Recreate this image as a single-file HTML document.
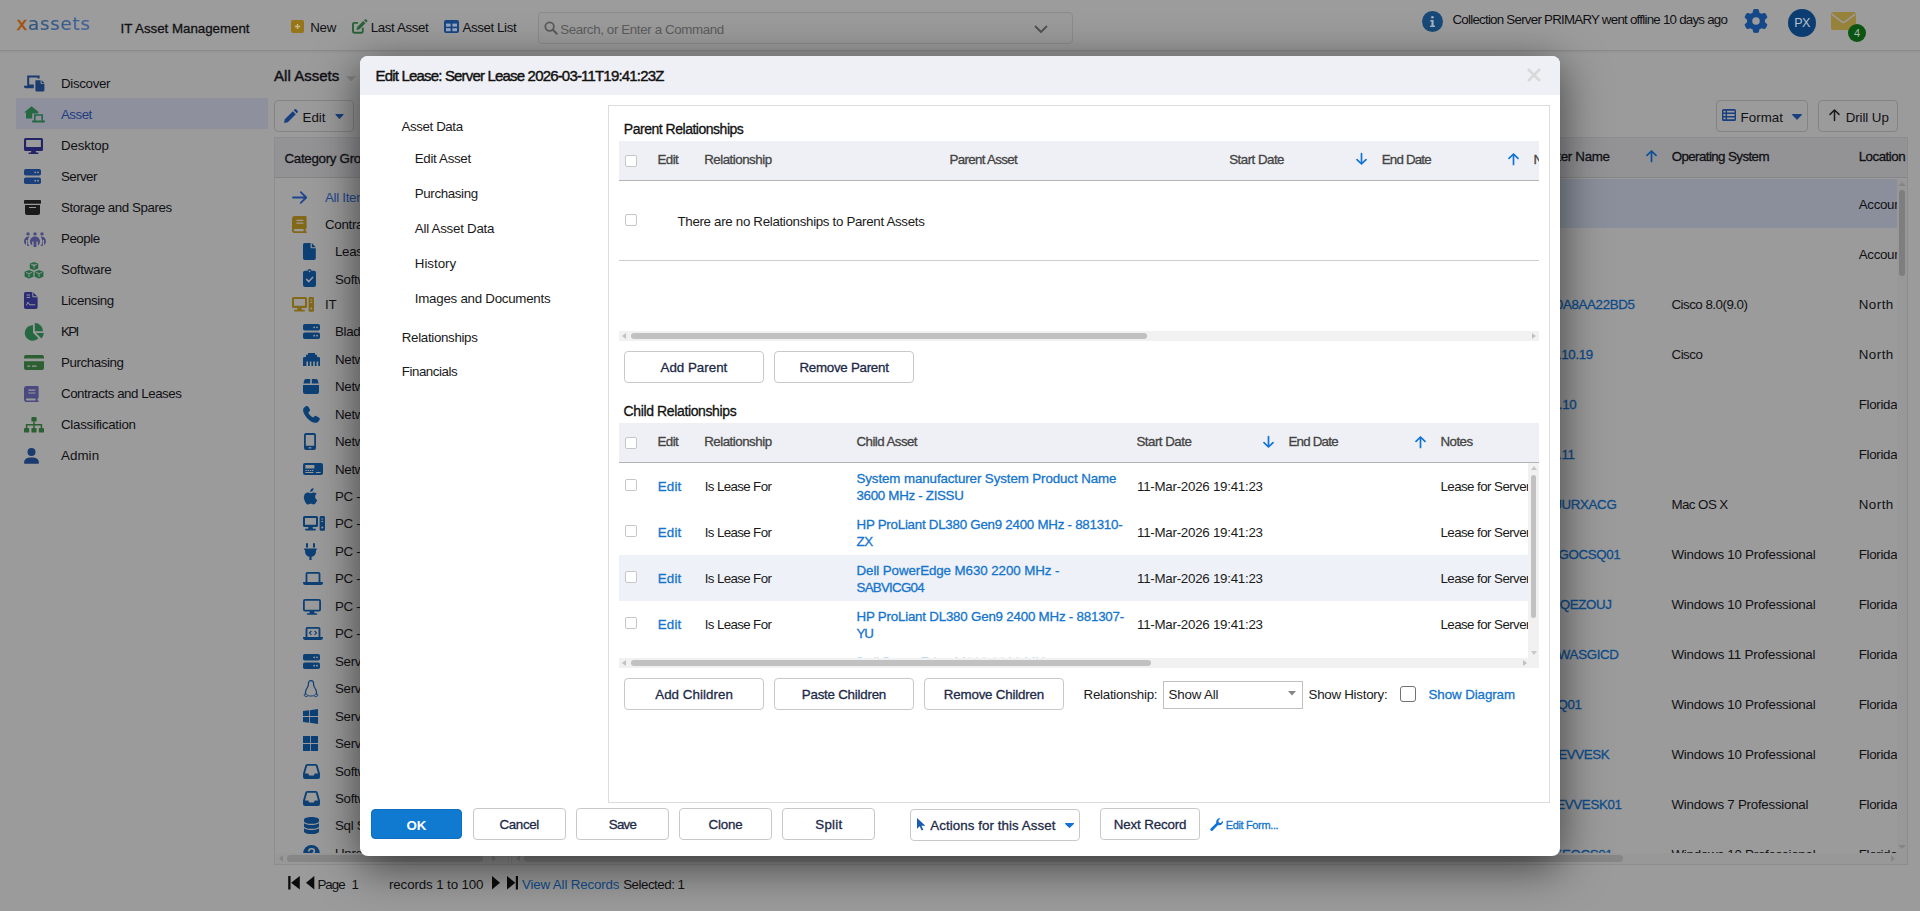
<!DOCTYPE html>
<html lang="en"><head><meta charset="utf-8"><title>xAssets - IT Asset Management</title>
<style>
*{box-sizing:border-box;margin:0;padding:0}
html,body{width:1920px;height:911px;overflow:hidden;background:#9b9b9b}
body{font-family:"Liberation Sans",sans-serif;font-size:13.33px;color:#111114;letter-spacing:-0.3px;position:relative}
.a{position:absolute}
.t{position:absolute;white-space:nowrap;line-height:20px;height:20px}
svg{position:absolute;overflow:visible}
.b{font-weight:bold}
.sb{-webkit-text-stroke:0.3px currentColor}
.sb2{-webkit-text-stroke:0.42px currentColor}
#bg{position:absolute;left:0;top:0;width:1920px;height:911px;background:#9b9b9b}
#top{position:absolute;left:0;top:0;width:1920px;height:51px;background:#9c9c9c;border-bottom:1px solid #8a8a8a;box-shadow:0 1px 2px rgba(0,0,0,.06)}
.btn{position:absolute;border:1px solid #848484;border-radius:4px;background:#9b9b9b;height:32px}
#modal{position:absolute;left:360px;top:56px;width:1200px;height:800px;background:#fff;border-radius:8px;box-shadow:0 10px 46px rgba(0,0,0,.6);color:#1a1a1a}
.cb{border:1px solid #c6c6c6;border-radius:2px;background:#fff}
.hd{color:#444}
.lk{color:#1575cc}
.mbtn{position:absolute;border:1px solid #c8c8c8;border-radius:4px;background:#fff}
.mbtn.ok{background:#1079d0;border-color:#0d6fc0}

</style></head><body>
<div id="bg"></div>
<div id="top">
<div class="t" style="left:16.5px;top:11px;font-family:'DejaVu Sans','Liberation Sans',sans-serif;font-size:18.3px;line-height:26px;height:26px;letter-spacing:0.75px"><span style="color:#a2520a;-webkit-text-stroke:0.4px #a2520a">x</span><span style="-webkit-text-stroke:0.12px #3a5c8c;background:linear-gradient(90deg,#2b5479,#44639d);-webkit-background-clip:text;background-clip:text;color:transparent">assets</span></div>
<div class="t sb" style="left:120.5px;top:19px;letter-spacing:-0.02px;">IT Asset Management</div>
<svg style="left:291px;top:20px" width="13" height="13" viewBox="0 0 13 13"><rect x="0" y="0" width="13" height="13" rx="2" fill="#977519"/><path d="M6.500 3.900v5.200M3.900 6.500h5.200" stroke="#c8b98a" stroke-width="1.400" fill="none"/></svg>
<div class="t" style="left:310.2px;top:18px;">New</div>
<svg style="left:352px;top:19px" width="15" height="15" viewBox="0 0 15 15"><path d="M10.800 8.800v3.700a1.200 1.200 0 0 1-1.200 1.200H2.200A1.200 1.200 0 0 1 1 12.500V5.100a1.200 1.200 0 0 1 1.200-1.200h3.800" stroke="#2a6338" stroke-width="1.900" fill="none"/><path d="M4.400 11.100l.8-3.100 6-6 2.300 2.300-6 6zM12 1.200l.8-.8a1 1 0 0 1 1.400 0l.9.900a1 1 0 0 1 0 1.400l-.8.800z" fill="#2a6338"/></svg>
<div class="t" style="left:370.8px;top:18px;letter-spacing:-0.41px;">Last Asset</div>
<svg style="left:444px;top:20px" width="15" height="13" viewBox="0 0 15 13"><rect x="0" y="0" width="15" height="13" rx="2" fill="#174684"/><rect x="2" y="3.600" width="4.600" height="3" fill="#9aa6c0"/><rect x="8.400" y="3.600" width="4.600" height="3" fill="#9aa6c0"/><rect x="2" y="8.200" width="4.600" height="3" fill="#9aa6c0"/><rect x="8.400" y="8.200" width="4.600" height="3" fill="#9aa6c0"/></svg>
<div class="t" style="left:462.5px;top:18px;letter-spacing:-0.41px;">Asset List</div>
<div class="a" style="left:538px;top:12px;width:535px;height:32px;border:1px solid #8c8c8c;border-radius:4px;background:#9b9b9b"></div>
<svg style="left:544px;top:21px" width="14" height="14" viewBox="0 0 14 14"><circle cx="5.600" cy="5.600" r="4.300" stroke="#5a5a5a" stroke-width="1.800" fill="none"/><path d="M8.800 8.800l4 4" stroke="#5a5a5a" stroke-width="2" stroke-linecap="round"/></svg>
<div class="t" style="left:560.2px;top:20px;letter-spacing:-0.37px;color:#5c5c5c;">Search, or Enter a Command</div>
<svg style="left:1034px;top:25px" width="14" height="9" viewBox="0 0 14 9"><path d="M1.500 1.500l5.500 5.500 5.500-5.500" stroke="#505050" stroke-width="1.800" fill="none" stroke-linecap="round" stroke-linejoin="round"/></svg>
<svg style="left:1422px;top:11px" width="21" height="21" viewBox="0 0 21 21"><circle cx="10.500" cy="10.500" r="10.500" fill="#174a78"/><path d="M8.300 9h3.300v5.400h1.400v1.500H8.100v-1.500h1.400v-3.900H8.300z" fill="#a9b3c0"/><circle cx="10.400" cy="6.300" r="1.300" fill="#a9b3c0"/></svg>
<div class="t" style="left:1452.5px;top:10px;letter-spacing:-0.76px;">Collection Server PRIMARY went offline 10 days ago</div>
<svg style="left:1744px;top:9px" width="24" height="24" viewBox="0 0 512 512"><path fill="#144888" d="M495.900 166.600c3.200 8.700 .5 18.400-6.400 24.600l-43.300 39.400c1.100 8.300 1.700 16.800 1.700 25.400s-.6 17.100-1.700 25.400l43.300 39.400c6.900 6.200 9.600 15.900 6.400 24.600c-4.400 11.900-9.700 23.300-15.800 34.300l-4.700 8.100c-6.600 11-14 21.400-22.100 31.200c-5.900 7.200-15.700 9.600-24.500 6.800l-55.700-17.700c-13.400 10.300-28.200 18.900-44 25.400l-12.500 57.100c-2 9.100-9 16.300-18.200 17.800c-13.800 2.300-28 3.500-42.500 3.500s-28.700-1.200-42.500-3.500c-9.200-1.500-16.200-8.700-18.200-17.800l-12.500-57.100c-15.800-6.500-30.600-15.100-44-25.400L83.100 425.900c-8.800 2.800-18.600 .3-24.500-6.800c-8.100-9.800-15.500-20.200-22.100-31.200l-4.700-8.100c-6.100-11-11.400-22.400-15.800-34.300c-3.200-8.700-.5-18.400 6.400-24.600l43.300-39.400C64.600 273.100 64 264.600 64 256s.6-17.100 1.700-25.400L22.400 191.200c-6.900-6.200-9.600-15.900-6.400-24.600c4.400-11.900 9.700-23.300 15.800-34.300l4.700-8.100c6.600-11 14-21.400 22.100-31.200c5.900-7.200 15.700-9.600 24.500-6.800l55.700 17.700c13.400-10.300 28.200-18.900 44-25.400l12.500-57.100c2-9.100 9-16.300 18.200-17.800C227.300 1.200 241.500 0 256 0s28.700 1.200 42.500 3.500c9.200 1.500 16.200 8.700 18.200 17.800l12.500 57.100c15.800 6.500 30.600 15.100 44 25.400l55.700-17.700c8.800-2.800 18.600-.3 24.500 6.800c8.100 9.800 15.500 20.200 22.100 31.200l4.700 8.100c6.100 11 11.400 22.400 15.800 34.300zM256 336a80 80 0 1 0 0-160 80 80 0 1 0 0 160z"/></svg>
<div class="a" style="left:1788px;top:9px;width:28px;height:28px;border-radius:14px;background:#0c3d72"></div>
<div class="t" style="left:1788px;top:13px;width:28px;text-align:center;color:#b9c0cc;font-size:12.5px;letter-spacing:-0.5px">PX</div>
<svg style="left:1831px;top:12px" width="25" height="18" viewBox="0 0 25 18"><rect x="0" y="0" width="25" height="18" rx="2.500" fill="#97823c"/><path d="M0.800 2.200l10.300 7.700a2.300 2.300 0 0 0 2.800 0l10.300-7.700" stroke="#9b9b9b" stroke-width="1.600" fill="none"/></svg>
<div class="a" style="left:1848px;top:24px;width:18px;height:18px;border-radius:9px;background:#0b5411"></div>
<div class="t" style="left:1848px;top:23px;width:18px;text-align:center;color:#a9b8a9;font-size:11px">4</div>
</div>
<div id="side">
  <div class="a" style="left:16px;top:98px;width:252px;height:31px;background:#8f909e"></div>

  <!-- Discover: laptop-file -->
  <svg style="left:24px;top:75px" width="22" height="17" viewBox="0 0 22 17"><path d="M3.2 0.4h12.4v3.2h-2V2.4H5.2v7.2h4.6v3.6H1.6A1.6 1.6 0 0 1 0 11.6V10.8h3.2z" fill="#1a3b70"/><path d="M11.4 5.2h5.2V8.8h3.8V15.2a1.4 1.4 0 0 1-1.4 1.4H12.8a1.4 1.4 0 0 1-1.4-1.4z" fill="#1a3b70"/><path d="M17.6 5.2l2.8 2.8h-2.8z" fill="#1a3b70"/></svg>
  <div class="t" style="left:61.0px;top:74px;letter-spacing:-0.33px;">Discover</div>

  <!-- Asset: house-laptop -->
  <svg style="left:24px;top:106px" width="22" height="17" viewBox="0 0 22 17"><path d="M7.6 0.2L0 6.6h2v6h6.2V7.4h5.6V6.6h1.4z" fill="#256842"/><path d="M10 8.2h9v6.4h2v0.8a1 1 0 0 1-1 1H9a1 1 0 0 1-1-1v-0.8h2zM11.6 9.8v4.8h5.8V9.8z" fill="#256842" fill-rule="evenodd"/></svg>
  <div class="t" style="left:61.0px;top:105px;letter-spacing:-0.52px;color:#223c7e;">Asset</div>

  <!-- Desktop -->
  <svg style="left:24px;top:138px" width="19" height="16" viewBox="0 0 19 16"><path d="M1.6 0h15.8A1.6 1.6 0 0 1 19 1.6v9.8A1.6 1.6 0 0 1 17.400 13H11.600l.5 1.600h2.300v1.400H4.600v-1.400h2.300l.5-1.600H1.600A1.600 1.600 0 0 1 0 11.400V1.600A1.600 1.600 0 0 1 1.600 0zM2.100 2.100v6.800h14.800V2.100z" fill="#232368" fill-rule="evenodd"/></svg>
  <div class="t" style="left:61.0px;top:136px;letter-spacing:-0.17px;">Desktop</div>

  <!-- Server -->
  <svg style="left:24px;top:169px" width="17" height="15" viewBox="0 0 17 15"><rect x="0" y="0" width="17" height="6.6" rx="1.8" fill="#1a3f7c"/><rect x="0" y="8.400" width="17" height="6.600" rx="1.800" fill="#1a3f7c"/><circle cx="11.200" cy="3.300" r=".9" fill="#9b9b9b"/><circle cx="14" cy="3.300" r=".9" fill="#9b9b9b"/><circle cx="11.200" cy="11.700" r=".9" fill="#9b9b9b"/><circle cx="14" cy="11.700" r=".9" fill="#9b9b9b"/></svg>
  <div class="t" style="left:61.0px;top:167px;letter-spacing:-0.58px;">Server</div>

  <!-- Storage: box-archive -->
  <svg style="left:24px;top:200px" width="17" height="15" viewBox="0 0 17 15"><rect x="0" y="0" width="17" height="3.800" rx=".9" fill="#1b1b1b"/><path d="M1 5h15v8a2 2 0 0 1-2 2H3a2 2 0 0 1-2-2zM5.500 6.900a.6.600 0 0 0 0 1.200h6a.6.600 0 0 0 0-1.200z" fill="#1b1b1b" fill-rule="evenodd"/></svg>
  <div class="t" style="left:61.0px;top:198px;letter-spacing:-0.44px;">Storage and Spares</div>

  <!-- People -->
  <svg style="left:24px;top:232px" width="22" height="15" viewBox="0 0 22 15"><circle cx="4" cy="1.900" r="1.700" fill="#4a4a80"/><circle cx="11" cy="1.900" r="1.700" fill="#4a4a80"/><circle cx="18" cy="1.900" r="1.700" fill="#4a4a80"/><path d="M4.400 4.600c-2.800.2-4.400 2.400-4.400 5 0 1.600.8 2.800 2 3.400v-5h1.200v6h2.400c-1.200-1.200-1.800-2.800-1.800-4.600 0-1.800.6-3.400 1.600-4.600z" fill="#4a4a80"/><path d="M17.600 4.600c2.800.2 4.400 2.400 4.400 5 0 1.600-.8 2.800-2 3.400v-5h-1.200v6h-2.400c1.200-1.200 1.800-2.800 1.800-4.600 0-1.800-.6-3.400-1.600-4.600z" fill="#4a4a80"/><path d="M11 4.400c-3 0-5 2.200-5 5 0 1.800.8 3.200 2.200 4V9.600h1.400V15h2.800V9.600h1.400v3.800c1.400-.8 2.200-2.200 2.200-4 0-2.800-2-5-5-5z" fill="#4a4a80"/></svg>
  <div class="t" style="left:61.0px;top:229px;letter-spacing:-0.49px;">People</div>

  <!-- Software: cubes -->
  <svg style="left:24px;top:262px" width="20" height="17" viewBox="0 0 20 17"><path d="M10 0l4.200 1.700v4.800L10 8.200 5.800 6.500V1.700zM7 2.600l3 1.200 3-1.200" fill="#256842"/><path d="M5 8l4.400 1.800v5L5 16.600.6 14.800v-5z" fill="#256842"/><path d="M15 8l4.400 1.800v5L15 16.600l-4.400-1.800v-5z" fill="#256842"/><path d="M7.200 2.500l2.800 1.100 2.800-1.100M10 3.600v3M2 10.400l3 1.200 3-1.200M5 11.600v3.400M12 10.400l3 1.200 3-1.200M15 11.600v3.400" stroke="#9b9b9b" stroke-width=".9" fill="none"/></svg>
  <div class="t" style="left:61.0px;top:260px;letter-spacing:-0.26px;">Software</div>

  <!-- Licensing: file-contract -->
  <svg style="left:24px;top:292px" width="14" height="17" viewBox="0 0 14 17"><path d="M1.800 0h7l4.800 4.800v10.400a1.800 1.800 0 0 1-1.800 1.800H1.800A1.800 1.800 0 0 1 0 15.200V1.800A1.800 1.800 0 0 1 1.800 0z" fill="#2b2b76"/><path d="M8.800 0v4.800h4.800M2.600 3h3.400M2.600 5.400h3.400M2.400 13.400l1.600-3.200 1.600 2.600h5.600" stroke="#9b9b9b" stroke-width="1" fill="none"/></svg>
  <div class="t" style="left:61.0px;top:291px;letter-spacing:-0.38px;">Licensing</div>

  <!-- KPI: chart-pie -->
  <svg style="left:25px;top:323px" width="19" height="18" viewBox="0 0 19 18"><path d="M8 2.200v7.600l5.400 5.400A7.800 7.800 0 1 1 8 2.200z" fill="#256842"/><path d="M9.800 0a8.200 8.200 0 0 1 8.200 8.200H9.800z" fill="#256842"/><path d="M11 10h7.800a8.200 8.200 0 0 1-2.400 5.400z" fill="#256842"/></svg>
  <div class="t" style="left:61.0px;top:322px;letter-spacing:-1.66px;">KPI</div>

  <!-- Purchasing: credit-card -->
  <svg style="left:24px;top:355px" width="20" height="15" viewBox="0 0 20 15"><path d="M2 0h16a2 2 0 0 1 2 2v1.400H0V2A2 2 0 0 1 2 0zM0 6.200h20V13a2 2 0 0 1-2 2H2a2 2 0 0 1-2-2zM3.400 10.600v1.200h2.800v-1.200zM8 10.600v1.200h4.600v-1.200z" fill="#2c6032" fill-rule="evenodd"/></svg>
  <div class="t" style="left:61.0px;top:353px;letter-spacing:-0.42px;">Purchasing</div>

  <!-- Contracts: book -->
  <svg style="left:24px;top:386px" width="15" height="16" viewBox="0 0 15 16"><path d="M2.800 0H13.400A1.200 1.200 0 0 1 14.600 1.200V11.400a1 1 0 0 1-1 1v2h.4a.8.800 0 0 1 0 1.600H2.800A2.800 2.800 0 0 1 0 13.200V2.800A2.800 2.800 0 0 1 2.800 0zM2.800 12.400a.8.800 0 0 0 0 2h8.800v-2zM4.400 3.600v1.200h7V3.600zM4.400 6.400v1.200h7V6.400z" fill="#4a4a80" fill-rule="evenodd"/></svg>
  <div class="t" style="left:61.0px;top:384px;letter-spacing:-0.46px;">Contracts and Leases</div>

  <!-- Classification: sitemap -->
  <svg style="left:24px;top:417px" width="20" height="16" viewBox="0 0 20 16"><rect x="7.400" y="0" width="5.200" height="4.600" rx=".9" fill="#2c6032"/><rect x="0" y="11" width="5.200" height="4.600" rx=".9" fill="#2c6032"/><rect x="7.400" y="11" width="5.200" height="4.600" rx=".9" fill="#2c6032"/><rect x="14.800" y="11" width="5.200" height="4.600" rx=".9" fill="#2c6032"/><path d="M10 4.600v6.400M2.600 11V7.800h14.800V11" stroke="#2c6032" stroke-width="1.500" fill="none"/></svg>
  <div class="t" style="left:61.0px;top:415px;letter-spacing:-0.27px;">Classification</div>

  <!-- Admin: user -->
  <svg style="left:24px;top:448px" width="15" height="16" viewBox="0 0 15 16"><circle cx="7.500" cy="4" r="4" fill="#1a3b70"/><path d="M5.400 9.400h4.200a5.400 5.400 0 0 1 5.400 5.400.9.900 0 0 1-.9.900H.9a.9.900 0 0 1-.9-.9 5.400 5.400 0 0 1 5.400-5.400z" fill="#1a3b70"/></svg>
  <div class="t" style="left:61.0px;top:446px;letter-spacing:0.07px;">Admin</div>
</div>

<div id="main">
<div class="t sb2" style="left:274.1px;top:66px;font-size:15px;letter-spacing:0.01px;">All Assets</div>
<svg style="left:346px;top:76px" width="10" height="5.500" viewBox="0 0 12 6"><path d="M0 0h12L6 6z" fill="#848484"/></svg>
<div class="btn" style="left:274px;top:100px;width:80px"></div>
<svg style="left:284px;top:109px" width="14" height="14" viewBox="0 0 14 14"><path d="M0 14l.8-3.800L8.800 2.200l3 3-8 8zM9.700 1.300l1-1a1 1 0 0 1 1.400 0l1.600 1.600a1 1 0 0 1 0 1.400l-1 1z" fill="#183f80"/></svg>
<div class="t" style="left:302.5px;top:108px;letter-spacing:0.03px;">Edit</div>
<svg style="left:335.3px;top:114.3px" width="9" height="5" viewBox="0 0 10 6"><path d="M0 .6A.6.600 0 0 1 .6 0h8.800a.6.600 0 0 1 .4 1L5.400 5.600a.6.600 0 0 1-.8 0L.2 1z" fill="#183f80"/></svg>
<div class="btn" style="left:1716px;top:100px;width:92px"></div>
<svg style="left:1722px;top:109px" width="14" height="12" viewBox="0 0 14 12"><path d="M1.600 0h10.800A1.600 1.600 0 0 1 14 1.600v8.800a1.600 1.600 0 0 1-1.600 1.600H1.600A1.600 1.600 0 0 1 0 10.400V1.600A1.600 1.600 0 0 1 1.600 0zM1.400 1.800v1.800h2.200V1.800zM5 1.800v1.800h7.600V1.800zM1.400 5.100v1.800h2.200V5.100zM5 5.100v1.800h7.600V5.100zM1.400 8.400v1.800h2.200V8.400zM5 8.400v1.800h7.600V8.400z" fill="#183f80" fill-rule="evenodd"/></svg>
<div class="t" style="left:1740.5px;top:108px;letter-spacing:0.05px;">Format</div>
<svg style="left:1792px;top:114px" width="10" height="6" viewBox="0 0 10 6"><path d="M0 .6A.6.600 0 0 1 .6 0h8.800a.6.600 0 0 1 .4 1L5.400 5.600a.6.600 0 0 1-.8 0L.2 1z" fill="#183f80"/></svg>
<div class="btn" style="left:1818px;top:100px;width:80px"></div>
<svg style="left:1829px;top:109px" width="11" height="12" viewBox="0 0 11 12"><path d="M5.500 11.400V1.200M1 5.400l4.500-4.400L10 5.400" stroke="#1a1a1a" stroke-width="1.500" fill="none" stroke-linecap="round" stroke-linejoin="round"/></svg>
<div class="t" style="left:1845.7px;top:108px;letter-spacing:-0.08px;">Drill Up</div>
<div class="a" style="left:274px;top:137px;width:1634px;height:728px;border:1px solid #8d8d8d"></div>
<div class="a" style="left:275px;top:138px;width:1632px;height:40px;background:#939396;border-bottom:1px solid #858587"></div>
<div class="t sb" style="left:284.5px;top:149px;">Category Group</div>
<div class="a" style="left:292px;top:189.4px;width:24px;height:17px"><svg style="left:0;top:2px" width="16" height="13" viewBox="0 0 16 13"><path d="M1 6.500h13M8.800 1.200l5.400 5.300-5.400 5.300" stroke="#1f4590" stroke-width="1.800" fill="none" stroke-linecap="round" stroke-linejoin="round"/></svg></div>
<div class="t" style="left:325.0px;top:188px;color:#1f4a90;">All Items</div>
<div class="a" style="left:292px;top:215.9px;width:24px;height:17px"><svg style="left:0;top:0" width="15" height="17" viewBox="0 0 15 17"><path d="M2.800 0H13.400A1.200 1.200 0 0 1 14.600 1.200V12a1 1 0 0 1-1 1v2.200h.4a.9.900 0 0 1 0 1.800H2.800A2.800 2.800 0 0 1 0 14.200V2.800A2.800 2.800 0 0 1 2.800 0zM2.800 13a1.100 1.100 0 0 0 0 2.200h8.800V13zM4.400 3.800v1.200h7V3.800zM4.400 6.600v1.200h7V6.600z" fill="#836817" fill-rule="evenodd"/></svg></div>
<div class="t" style="left:325.0px;top:215px;">Contracts</div>
<div class="a" style="left:303px;top:242.7px;width:24px;height:17px"><svg style="left:0;top:0" width="13" height="17" viewBox="0 0 13 17"><path d="M1.800 0H7.600V4.200a1 1 0 0 0 1 1H12.800V15.200a1.800 1.800 0 0 1-1.800 1.800H1.800A1.800 1.800 0 0 1 0 15.200V1.800A1.800 1.800 0 0 1 1.800 0zM8.800 0l4 4.200H8.800z" fill="#0d4175"/></svg></div>
<div class="t" style="left:335.0px;top:242px;">Leases</div>
<div class="a" style="left:303px;top:270.4px;width:24px;height:17px"><svg style="left:0;top:-1px" width="13" height="18" viewBox="0 0 13 18"><path d="M6.500 0a2.200 2.200 0 0 1 2.100 1.800H11a2 2 0 0 1 2 2V16a2 2 0 0 1-2 2H2a2 2 0 0 1-2-2V3.800a2 2 0 0 1 2-2h2.400A2.200 2.200 0 0 1 6.500 0z" fill="#0d4175"/><circle cx="6.500" cy="2.400" r=".8" fill="#9b9b9b"/><path d="M3.600 10.400l2.200 2.200 3.800-4.200" stroke="#9b9b9b" stroke-width="1.500" fill="none" stroke-linecap="round" stroke-linejoin="round"/></svg></div>
<div class="t" style="left:335.0px;top:270px;">Software Maintenance</div>
<div class="a" style="left:292px;top:295.6px;width:24px;height:17px"><svg style="left:0;top:1px" width="22" height="15" viewBox="0 0 22 15"><path d="M1.600 0h11.800A1.600 1.600 0 0 1 15 1.600v7.800a1.600 1.600 0 0 1-1.600 1.600H9.600l.4 1.800h2.200a.8.800 0 0 1 0 1.600H2.800a.8.800 0 0 1 0-1.600H5l.4-1.800H1.600A1.600 1.600 0 0 1 0 9.400V1.600A1.600 1.600 0 0 1 1.600 0zM2 2v6.800h11V2zM18 0h2.600A1.400 1.400 0 0 1 22 1.400v12a1.400 1.400 0 0 1-1.400 1.400H18a1.400 1.400 0 0 1-1.400-1.400v-12A1.400 1.400 0 0 1 18 0zM18.400 2.400v1h1.800v-1zM18.400 5v1h1.800V5zM19.300 10.400a1 1 0 1 0 0 2 1 1 0 0 0 0-2z" fill="#836817" fill-rule="evenodd"/></svg></div>
<div class="t" style="left:325.0px;top:295px;">IT</div>
<div class="a" style="left:303px;top:323.1px;width:24px;height:17px"><svg style="left:0;top:1px" width="17" height="15" viewBox="0 0 17 15"><rect x="0" y="0" width="17" height="6.600" rx="1.800" fill="#0d4175"/><rect x="0" y="8.400" width="17" height="6.600" rx="1.800" fill="#0d4175"/><circle cx="11.200" cy="3.300" r=".9" fill="#9b9b9b"/><circle cx="14" cy="3.300" r=".9" fill="#9b9b9b"/><circle cx="11.200" cy="11.700" r=".9" fill="#9b9b9b"/><circle cx="14" cy="11.700" r=".9" fill="#9b9b9b"/></svg></div>
<div class="t" style="left:335.0px;top:322px;">Blade Enclosure</div>
<div class="a" style="left:303px;top:350.6px;width:24px;height:17px"><svg style="left:0;top:2px" width="17" height="13" viewBox="0 0 17 13"><path d="M5 0h7v1.800h2V4h1.600A1.400 1.400 0 0 1 17 5.400V13h-1.800V8.600h-1.600V13h-1.800V8.600h-1.600V13H8.400V8.600H6.800V13H5V8.600H3.400V13H0V5.400A1.400 1.400 0 0 1 1.400 4H3V1.800h2z" fill="#0d4175"/></svg></div>
<div class="t" style="left:335.0px;top:350px;">Network - Switch</div>
<div class="a" style="left:303px;top:378.0px;width:24px;height:17px"><svg style="left:0;top:1px" width="16" height="15" viewBox="0 0 16 15"><path d="M2.800 0H7.200V4.400H0.400L1.400 1A1.600 1.600 0 0 1 2.800 0zM8.800 0h4.400A1.600 1.600 0 0 1 14.600 1l1 3.400H8.800zM0 6h16v7a2 2 0 0 1-2 2H2a2 2 0 0 1-2-2z" fill="#0d4175"/></svg></div>
<div class="t" style="left:335.0px;top:377px;">Network - Device</div>
<div class="a" style="left:303px;top:405.5px;width:24px;height:17px"><svg style="left:0;top:0" width="17" height="17" viewBox="0 0 17 17"><path d="M5.400.8L4.200.1a1.400 1.400 0 0 0-1.600.2L.8 2C-.4 3.400 0 6.600 2.600 10.200c2.600 3.600 6 6.200 9.400 6.600 1.600.2 2.600-.4 3.400-1.400l1.200-1.600a1.400 1.400 0 0 0-.4-2l-3-1.800a1.400 1.400 0 0 0-1.700.2l-1.300 1.400c-1.800-.8-4-3-5-5.200l1.400-1.200a1.400 1.400 0 0 0 .4-1.600z" fill="#0d4175"/></svg></div>
<div class="t" style="left:335.0px;top:405px;">Network - IP Phone</div>
<div class="a" style="left:303px;top:432.9px;width:24px;height:17px"><svg style="left:0.5px;top:0" width="12" height="17" viewBox="0 0 12 17"><path d="M2 0h8a2 2 0 0 1 2 2v13a2 2 0 0 1-2 2H2a2 2 0 0 1-2-2V2A2 2 0 0 1 2 0zM1.800 2v10.800h8.400V2zM4.600 14.200v1.200h2.800v-1.200z" fill="#0d4175" fill-rule="evenodd"/></svg></div>
<div class="t" style="left:335.0px;top:432px;">Network - Mobile</div>
<div class="a" style="left:303px;top:460.4px;width:24px;height:17px"><svg style="left:0;top:3px" width="20" height="12" viewBox="0 0 20 12"><path d="M2 0h16a2 2 0 0 1 2 2v8a2 2 0 0 1-2 2H2a2 2 0 0 1-2-2V2A2 2 0 0 1 2 0zM2.400 2v3.600h9V2zM2.400 7v1h1.400V7zM4.600 7v1H6V7zM6.800 7v1h1.400V7zM9 7v1h1.400V7zM2.400 9v1h8V9zM13 9v1h4.600V9z" fill="#0d4175" fill-rule="evenodd"/></svg></div>
<div class="t" style="left:335.0px;top:460px;">Network - Router</div>
<div class="a" style="left:303px;top:487.9px;width:24px;height:17px"><svg style="left:0;top:0" width="15" height="17" viewBox="0 0 15 17"><path d="M10.600 0c.1 1-.3 2-.9 2.700-.6.700-1.600 1.300-2.500 1.200-.1-1 .4-2 .9-2.600C8.700.6 9.800.1 10.600 0zM13.800 5.800c-1 .6-1.700 1.600-1.700 2.900 0 1.500.9 2.700 2.100 3.200-.3.900-.7 1.700-1.200 2.500-.7 1-1.400 2-2.500 2s-1.400-.6-2.700-.6c-1.200 0-1.700.6-2.700.7-1.100 0-1.900-1.100-2.600-2.100C1.100 12.300.1 8.900 1.500 6.500c.7-1.200 2-2 3.300-2 1.100 0 2.100.7 2.700.7.600 0 1.900-.9 3.200-.8.600 0 2.100.2 3.100 1.400z" fill="#0d4175"/></svg></div>
<div class="t" style="left:335.0px;top:487px;">PC - Apple</div>
<div class="a" style="left:303px;top:515.3px;width:24px;height:17px"><svg style="left:0;top:1px" width="22" height="15" viewBox="0 0 22 15"><path d="M1.600 0h11.800A1.600 1.600 0 0 1 15 1.600v7.800a1.600 1.600 0 0 1-1.600 1.600H9.600l.4 1.800h2.200a.8.800 0 0 1 0 1.600H2.800a.8.800 0 0 1 0-1.600H5l.4-1.800H1.600A1.600 1.600 0 0 1 0 9.400V1.600A1.600 1.600 0 0 1 1.600 0zM2 2v6.800h11V2zM18 0h2.600A1.400 1.400 0 0 1 22 1.400v12a1.400 1.400 0 0 1-1.400 1.400H18a1.400 1.400 0 0 1-1.400-1.400v-12A1.400 1.400 0 0 1 18 0zM18.400 2.400v1h1.800v-1zM18.400 5v1h1.800V5zM19.300 10.400a1 1 0 1 0 0 2 1 1 0 0 0 0-2z" fill="#0d4175" fill-rule="evenodd"/></svg></div>
<div class="t" style="left:335.0px;top:514px;">PC - Desktop</div>
<div class="a" style="left:303px;top:542.8px;width:24px;height:17px"><svg style="left:1px;top:0" width="13" height="17" viewBox="0 0 13 17"><path d="M3 0a1 1 0 0 1 1 1v3.400H2V1a1 1 0 0 1 1-1zM10 0a1 1 0 0 1 1 1v3.400H9V1a1 1 0 0 1 1-1zM.8 5.400h11.400a.8.800 0 0 1 0 1.600H12v1.800c0 2.600-1.800 4.600-4.400 5V17H5.400v-3.200C2.800 13.400 1 11.400 1 8.800V7H.8a.8.800 0 0 1 0-1.600z" fill="#0d4175"/></svg></div>
<div class="t" style="left:335.0px;top:542px;">PC - Thin Client</div>
<div class="a" style="left:303px;top:570.2px;width:24px;height:17px"><svg style="left:0;top:2px" width="20" height="14" viewBox="0 0 20 14"><path d="M4.400 0h11.200A1.800 1.800 0 0 1 17.400 1.800V10H20v.8A2.200 2.200 0 0 1 17.800 13H2.200A2.200 2.200 0 0 1 0 10.800V10h2.600V1.800A1.800 1.800 0 0 1 4.400 0zM4.400 1.800V10h11.200V1.800z" fill="#0d4175" fill-rule="evenodd"/></svg></div>
<div class="t" style="left:335.0px;top:569px;">PC - Laptop</div>
<div class="a" style="left:303px;top:597.7px;width:24px;height:17px"><svg style="left:0;top:1px" width="18" height="16" viewBox="0 0 18 16"><path d="M2 0h14a2 2 0 0 1 2 2v8.600a2 2 0 0 1-2 2h-4.800l.4 1.600h1.800a.8.800 0 0 1 0 1.600H4.600a.8.800 0 0 1 0-1.600h1.800l.4-1.600H2a2 2 0 0 1-2-2V2A2 2 0 0 1 2 0zM1.800 1.800v9h14.400v-9z" fill="#0d4175" fill-rule="evenodd"/></svg></div>
<div class="t" style="left:335.0px;top:597px;">PC - Workstation</div>
<div class="a" style="left:303px;top:625.2px;width:24px;height:17px"><svg style="left:0;top:2px" width="20" height="14" viewBox="0 0 20 14"><path d="M4.400 0h11.200A1.800 1.800 0 0 1 17.400 1.800V10H20v.8A2.200 2.200 0 0 1 17.800 13H2.200A2.200 2.200 0 0 1 0 10.800V10h2.600V1.800A1.800 1.800 0 0 1 4.400 0zM4.400 1.800V10h11.200V1.800z" fill="#0d4175" fill-rule="evenodd"/><path d="M8.400 3.800L6.600 5.800l1.800 2M11.600 3.800l1.800 2-1.800 2" stroke="#0d4175" stroke-width="1.200" fill="none"/></svg></div>
<div class="t" style="left:335.0px;top:624px;">PC - Virtual</div>
<div class="a" style="left:303px;top:652.6px;width:24px;height:17px"><svg style="left:0;top:1px" width="17" height="15" viewBox="0 0 17 15"><rect x="0" y="0" width="17" height="6.600" rx="1.800" fill="#0d4175"/><rect x="0" y="8.400" width="17" height="6.600" rx="1.800" fill="#0d4175"/><circle cx="11.200" cy="3.300" r=".9" fill="#9b9b9b"/><circle cx="14" cy="3.300" r=".9" fill="#9b9b9b"/><circle cx="11.200" cy="11.700" r=".9" fill="#9b9b9b"/><circle cx="14" cy="11.700" r=".9" fill="#9b9b9b"/></svg></div>
<div class="t" style="left:335.0px;top:652px;">Server</div>
<div class="a" style="left:303px;top:680.1px;width:24px;height:17px"><svg style="left:1px;top:0" width="14" height="17" viewBox="0 0 14 17"><path d="M7 .6c-1.800 0-2.600 1.400-2.600 3 0 1.400.2 2-.8 3.400C2.400 8.800 1.400 11 1.400 12.800c0 .8.200 1.400.4 1.800" stroke="#0d4175" stroke-width="1.200" fill="none"/><path d="M7 .6c1.800 0 2.600 1.400 2.600 3 0 1.400-.2 2 .8 3.400 1.200 1.800 2.200 4 2.200 5.800 0 .8-.2 1.400-.4 1.800" stroke="#0d4175" stroke-width="1.200" fill="none"/><path d="M.6 14.200c.8-.6 2-.2 2.800.8.800 1 .2 1.600-.8 1.600S.2 16 .2 15.200c0-.4.200-.8.400-1zM13.400 14.200c-.8-.6-2-.2-2.800.8-.8 1-.2 1.600.8 1.600s2.400-.6 2.400-1.400c0-.4-.2-.8-.4-1zM4.400 15.600c1.600.6 3.600.6 5.200 0" stroke="#0d4175" stroke-width="1" fill="none"/></svg></div>
<div class="t" style="left:335.0px;top:679px;">Server - Linux</div>
<div class="a" style="left:303px;top:707.5px;width:24px;height:17px"><svg style="left:0;top:1px" width="15" height="15" viewBox="0 0 15 15"><path d="M0 2.100L6.100 1.300V7.100H0zM6.900 1.200L15 0V7.100H6.900zM0 7.900H6.100V13.700L0 12.900zM6.900 7.900H15V15L6.900 13.800z" fill="#0d4175"/></svg></div>
<div class="t" style="left:335.0px;top:707px;">Server - Windows</div>
<div class="a" style="left:303px;top:735.0px;width:24px;height:17px"><svg style="left:0;top:1px" width="15" height="15" viewBox="0 0 15 15"><path d="M0 0H7.100V7.100H0zM7.900 0H15V7.100H7.900zM0 7.900H7.100V15H0zM7.900 7.900H15V15H7.900z" fill="#0d4175"/></svg></div>
<div class="t" style="left:335.0px;top:734px;">Server - Windows 2022</div>
<div class="a" style="left:303px;top:762.5px;width:24px;height:17px"><svg style="left:0;top:1px" width="17" height="15" viewBox="0 0 17 15"><path d="M4.200 0h8.600a2 2 0 0 1 1.900 1.500L17 9.400V13a2 2 0 0 1-2 2H2a2 2 0 0 1-2-2V9.400L2.300 1.500A2 2 0 0 1 4.200 0zM4.200 1.800L2 9.400h3.200l1 2h4.600l1-2H15L12.800 1.800z" fill="#0d4175" fill-rule="evenodd"/></svg></div>
<div class="t" style="left:335.0px;top:762px;">Software</div>
<div class="a" style="left:303px;top:789.9px;width:24px;height:17px"><svg style="left:0;top:1px" width="17" height="15" viewBox="0 0 17 15"><path d="M4.200 0h8.600a2 2 0 0 1 1.900 1.500L17 9.400V13a2 2 0 0 1-2 2H2a2 2 0 0 1-2-2V9.400L2.300 1.500A2 2 0 0 1 4.200 0zM4.200 1.800L2 9.400h3.200l1 2h4.600l1-2H15L12.800 1.800z" fill="#0d4175" fill-rule="evenodd"/></svg></div>
<div class="t" style="left:335.0px;top:789px;">Software - Package</div>
<div class="a" style="left:303px;top:817.4px;width:24px;height:17px"><svg style="left:1px;top:0" width="15" height="17" viewBox="0 0 15 17"><path d="M7.500 0C11.600 0 15 1.100 15 2.600v1.600C15 5.700 11.600 6.800 7.500 6.800S0 5.700 0 4.200V2.600C0 1.100 3.400 0 7.500 0zM0 6.200c1.400 1.200 4.400 1.800 7.500 1.800s6.100-.6 7.500-1.800v3c0 1.500-3.400 2.600-7.500 2.600S0 10.700 0 9.200zM0 11.200c1.400 1.200 4.400 1.800 7.500 1.800s6.100-.6 7.500-1.800v3.200c0 1.500-3.400 2.600-7.500 2.600S0 15.900 0 14.400z" fill="#0d4175"/></svg></div>
<div class="t" style="left:335.0px;top:816px;">Sql Server</div>
<div class="a" style="left:303px;top:844.8px;width:24px;height:17px"><svg style="left:0;top:0" width="17" height="17" viewBox="0 0 17 17"><circle cx="8.500" cy="8.500" r="8.500" fill="#0d4175"/><path d="M5.800 6.400c0-1.600 1.200-2.600 2.800-2.600s2.800 1 2.800 2.400c0 1.800-2.600 2-2.600 3.800" stroke="#9b9b9b" stroke-width="1.600" fill="none"/><circle cx="8.700" cy="12.600" r="1" fill="#9b9b9b"/></svg></div>
<div class="t" style="left:335.0px;top:844px;">Unrecognised</div>
<div class="a" style="left:275px;top:853px;width:233px;height:11px;background:#989898"></div>
<div class="a" style="left:287px;top:855px;width:196px;height:7px;border-radius:4px;background:#868686"></div>
<svg style="left:279px;top:855px" width="4" height="7" viewBox="0 0 4 7"><path d="M4 0v7L0 3.500z" fill="#858585"/></svg>
<svg style="left:492px;top:855px" width="4" height="7" viewBox="0 0 4 7"><path d="M0 0v7l4-3.500z" fill="#858585"/></svg>
<div class="a" style="left:508px;top:178px;width:1px;height:686px;background:#8d8d8d"></div>
<div class="a" style="left:511px;top:178px;width:1px;height:686px;background:#8d8d8d"></div>
<div class="a" style="left:512px;top:853px;width:1395px;height:11px;background:#989898"></div>
<div class="a" style="left:524px;top:855px;width:1099px;height:7px;border-radius:4px;background:#868686"></div>
<svg style="left:516px;top:855px" width="4" height="7" viewBox="0 0 4 7"><path d="M4 0v7L0 3.500z" fill="#858585"/></svg>
<svg style="left:1891px;top:855px" width="4" height="7" viewBox="0 0 4 7"><path d="M0 0v7l4-3.500z" fill="#858585"/></svg>
<div class="t sb" style="right:310.3px;top:147px;">Computer Name</div>
<svg style="left:1646px;top:150px" width="11" height="12" viewBox="0 0 11 12"><path d="M5.500 11.400V1.200M1 5.400l4.500-4.400L10 5.400" stroke="#0d4f96" stroke-width="1.700" fill="none" stroke-linecap="round" stroke-linejoin="round"/></svg>
<div class="t sb" style="left:1671.7px;top:147px;letter-spacing:-0.59px;">Operating System</div>
<div class="a" style="left:1850px;top:140px;width:57px;height:36px;overflow:hidden"><div class="t sb" style="left:8.7px;top:7px;letter-spacing:-0.50px;">Location</div></div>
<div class="a" style="left:512px;top:179px;width:1385px;height:49px;background:#8a8f9b"></div>
<div class="a" id="rlist" style="left:1560px;top:179px;width:337px;height:674px;overflow:hidden">
<div class="t" style="left:298.7px;top:16px;">Accounts</div>
<div class="t" style="left:298.7px;top:66px;">Accounts</div>
<div class="t sb" style="right:262.4px;top:116px;letter-spacing:-0.35px;color:#0f4c8a;">SEP00A8AA22BD5</div>
<div class="t" style="left:111.5px;top:116px;letter-spacing:-0.51px;">Cisco 8.0(9.0)</div>
<div class="t" style="left:298.7px;top:116px;letter-spacing:0.49px;">North</div>
<div class="t sb" style="right:304.1px;top:166px;letter-spacing:-0.35px;color:#0f4c8a;">192.168.10.19</div>
<div class="t" style="left:111.5px;top:166px;letter-spacing:-0.49px;">Cisco</div>
<div class="t" style="left:298.7px;top:166px;letter-spacing:0.49px;">North</div>
<div class="t sb" style="right:320.6px;top:216px;letter-spacing:-0.35px;color:#0f4c8a;">10.0.1.10</div>
<div class="t" style="left:298.7px;top:216px;">Florida</div>
<div class="t sb" style="right:322.4px;top:266px;letter-spacing:-0.35px;color:#0f4c8a;">10.0.1.11</div>
<div class="t" style="left:298.7px;top:266px;">Florida</div>
<div class="t sb" style="right:280.6px;top:316px;letter-spacing:-0.35px;color:#0f4c8a;">MACSJURXACG</div>
<div class="t" style="left:111.5px;top:316px;letter-spacing:-0.57px;">Mac OS X</div>
<div class="t" style="left:298.7px;top:316px;letter-spacing:0.49px;">North</div>
<div class="t sb" style="right:276.6px;top:366px;letter-spacing:-0.35px;color:#0f4c8a;">WKSAGOCSQ01</div>
<div class="t" style="left:111.5px;top:366px;letter-spacing:-0.25px;">Windows 10 Professional</div>
<div class="t" style="left:298.7px;top:366px;">Florida</div>
<div class="t sb" style="right:285.4px;top:416px;letter-spacing:-0.35px;color:#0f4c8a;">WKSAQEZOUJ</div>
<div class="t" style="left:111.5px;top:416px;letter-spacing:-0.25px;">Windows 10 Professional</div>
<div class="t" style="left:298.7px;top:416px;">Florida</div>
<div class="t sb" style="right:278.4px;top:466px;letter-spacing:-0.35px;color:#0f4c8a;">WKSWASGICD</div>
<div class="t" style="left:111.5px;top:466px;letter-spacing:-0.21px;">Windows 11 Professional</div>
<div class="t" style="left:298.7px;top:466px;">Florida</div>
<div class="t sb" style="right:315.4px;top:516px;letter-spacing:-0.35px;color:#0f4c8a;">WKSOCSQ01</div>
<div class="t" style="left:111.5px;top:516px;letter-spacing:-0.25px;">Windows 10 Professional</div>
<div class="t" style="left:298.7px;top:516px;">Florida</div>
<div class="t sb" style="right:287.6px;top:566px;letter-spacing:-0.35px;color:#0f4c8a;">WKSYEVVESK</div>
<div class="t" style="left:111.5px;top:566px;letter-spacing:-0.25px;">Windows 10 Professional</div>
<div class="t" style="left:298.7px;top:566px;">Florida</div>
<div class="t sb" style="right:275.4px;top:616px;letter-spacing:-0.35px;color:#0f4c8a;">WKSYEVVESK01</div>
<div class="t" style="left:111.5px;top:616px;letter-spacing:-0.25px;">Windows 7 Professional</div>
<div class="t" style="left:298.7px;top:616px;">Florida</div>
<div class="t sb" style="right:284.6px;top:666px;letter-spacing:-0.35px;color:#0f4c8a;">WKSXEOCS01</div>
<div class="t" style="left:111.5px;top:666px;letter-spacing:-0.25px;">Windows 10 Professional</div>
<div class="t" style="left:298.7px;top:666px;">Florida</div>
</div>
<div class="a" style="left:1897px;top:179px;width:10px;height:674px;background:#989898"></div>
<div class="a" style="left:1899px;top:190px;width:6px;height:86px;border-radius:3px;background:#7e7e7e"></div>
<svg style="left:1898px;top:182px" width="8" height="4" viewBox="0 0 8 4"><path d="M0 4h8L4 0z" fill="#858585"/></svg>
<svg style="left:1898px;top:845px" width="8" height="4" viewBox="0 0 8 4"><path d="M0 0h8L4 4z" fill="#858585"/></svg>
<svg style="left:287.500px;top:876px" width="12" height="13.500" viewBox="0 0 12 14"><path d="M0 0h2.400v14H0zM12 0v14L3 7z" fill="#0c0c0c"/></svg>
<svg style="left:306.200px;top:876px" width="8.300" height="13.500" viewBox="0 0 9 14" preserveAspectRatio="none"><path d="M9 0v14L0 7z" fill="#0c0c0c"/></svg>
<div class="t" style="left:317.5px;top:875px;letter-spacing:-1.02px;">Page</div>
<div class="t" style="left:351.5px;top:875px;">1</div>
<div class="t" style="left:389.0px;top:875px;letter-spacing:-0.12px;">records 1 to 100</div>
<svg style="left:492px;top:876px" width="8" height="13.500" viewBox="0 0 9 14" preserveAspectRatio="none"><path d="M0 0v14l9-7z" fill="#0c0c0c"/></svg>
<svg style="left:507px;top:876px" width="11" height="13.500" viewBox="0 0 12 14" preserveAspectRatio="none"><path d="M9.600 0H12v14H9.600zM0 0v14l9-7z" fill="#0c0c0c"/></svg>
<div class="t" style="left:522.0px;top:875px;letter-spacing:-0.15px;color:#0f4c8a;">View All Records</div>
<div class="t" style="left:623.2px;top:875px;letter-spacing:-0.49px;">Selected: 1</div>
</div>
<div id="modal">
<div class="a" style="left:0;top:0;width:1200px;height:39px;background:#eff0f5;border-radius:8px 8px 0 0"></div>
<div class="t sb2" style="left:15.5px;top:10px;font-size:15px;letter-spacing:-0.82px;color:#111;">Edit Lease: Server Lease 2026-03-11T19:41:23Z</div>
<svg style="left:1167px;top:12px" width="14" height="14" viewBox="0 0 14 14"><path d="M1 1l12 12M13 1L1 13" stroke="#d9d9d9" stroke-width="2.700" fill="none"/></svg>
<div class="t" style="left:41.5px;top:61px;letter-spacing:-0.40px;">Asset Data</div>
<div class="t" style="left:54.8px;top:93px;letter-spacing:-0.33px;">Edit Asset</div>
<div class="t" style="left:54.8px;top:128px;letter-spacing:-0.37px;">Purchasing</div>
<div class="t" style="left:54.8px;top:163px;letter-spacing:-0.26px;">All Asset Data</div>
<div class="t" style="left:54.8px;top:198px;letter-spacing:-0.03px;">History</div>
<div class="t" style="left:54.8px;top:233px;letter-spacing:-0.26px;">Images and Documents</div>
<div class="t" style="left:41.8px;top:272px;letter-spacing:-0.33px;">Relationships</div>
<div class="t" style="left:41.8px;top:306px;letter-spacing:-0.47px;">Financials</div>
<div class="a" style="left:248px;top:49px;width:942px;height:698px;border:1px solid #dcdcdc"></div>
<div class="t sb" style="left:263.8px;top:63px;font-size:14px;letter-spacing:-0.48px;color:#111;">Parent Relationships</div>
<div class="a" style="left:259px;top:85px;width:920px;height:40px;background:#eff0f5;border-bottom:1px solid #b4b4b4"></div>
<div class="a cb" style="left:265px;top:99px;width:12px;height:12px"></div>
<div class="t sb hd" style="left:297.5px;top:94px;letter-spacing:-0.55px;">Edit</div>
<div class="t sb hd" style="left:344.2px;top:94px;letter-spacing:-0.50px;">Relationship</div>
<div class="t sb hd" style="left:589.5px;top:94px;letter-spacing:-0.68px;">Parent Asset</div>
<div class="t sb hd" style="left:869.2px;top:94px;letter-spacing:-0.52px;">Start Date</div>
<div class="t sb hd" style="left:1021.8px;top:94px;letter-spacing:-0.83px;">End Date</div>
<div class="a" style="left:1170px;top:94px;width:9px;height:20px;overflow:hidden"><div class="t sb hd" style="left:3.5px;top:0px;">Notes</div></div>
<svg style="left:995.5px;top:97.4px" width="11" height="12" viewBox="0 0 11 12"><path d="M5.500 .6V10.800M1 6.600l4.500 4.400 4.500-4.400" stroke="#1273d4" stroke-width="1.700" fill="none" stroke-linecap="round" stroke-linejoin="round"/></svg>
<svg style="left:1147.5px;top:97.4px" width="11" height="12" viewBox="0 0 11 12"><path d="M5.500 11.400V1.200M1 5.400l4.500-4.400 4.500 4.400" stroke="#1273d4" stroke-width="1.700" fill="none" stroke-linecap="round" stroke-linejoin="round"/></svg>
<div class="a cb" style="left:265px;top:158px;width:12px;height:12px"></div>
<div class="t" style="left:317.5px;top:156px;letter-spacing:-0.32px;">There are no Relationships to Parent Assets</div>
<div class="a" style="left:259px;top:204px;width:920px;height:1px;background:#cfcfcf"></div>
<div class="a" style="left:259px;top:275px;width:920px;height:10px;background:#f1f1f1"></div>
<div class="a" style="left:271px;top:277px;width:516px;height:6px;border-radius:3px;background:#c1c1c1"></div>
<svg style="left:262px;top:277px" width="4" height="6" viewBox="0 0 4 6"><path d="M4 0v6L0 3z" fill="#c1c1c1"/></svg>
<svg style="left:1172px;top:277px" width="4" height="6" viewBox="0 0 4 6"><path d="M0 0v6l4-3z" fill="#c1c1c1"/></svg>
<div class="mbtn " style="left:264px;top:295px;width:140px;height:32px"></div>
<div class="mbtn " style="left:414px;top:295px;width:140px;height:32px"></div>
<div class="t sb" style="left:300.5px;top:302px;letter-spacing:0.01px;color:#1d2a48;">Add Parent</div>
<div class="t sb" style="left:439.5px;top:302px;letter-spacing:-0.27px;color:#1d2a48;">Remove Parent</div>
<div class="t sb" style="left:263.5px;top:345px;font-size:14px;letter-spacing:-0.37px;color:#111;">Child Relationships</div>
<div class="a" style="left:259px;top:367px;width:920px;height:40px;background:#eff0f5;border-bottom:1px solid #b4b4b4"></div>
<div class="a cb" style="left:265px;top:381px;width:12px;height:12px"></div>
<div class="t sb hd" style="left:297.5px;top:376px;letter-spacing:-0.55px;">Edit</div>
<div class="t sb hd" style="left:344.2px;top:376px;letter-spacing:-0.50px;">Relationship</div>
<div class="t sb hd" style="left:496.5px;top:376px;letter-spacing:-0.56px;">Child Asset</div>
<div class="t sb hd" style="left:776.5px;top:376px;letter-spacing:-0.52px;">Start Date</div>
<div class="t sb hd" style="left:928.5px;top:376px;letter-spacing:-0.79px;">End Date</div>
<div class="t sb hd" style="left:1080.5px;top:376px;letter-spacing:-0.56px;">Notes</div>
<svg style="left:902.5px;top:379.5px" width="11" height="12" viewBox="0 0 11 12"><path d="M5.500 .6V10.800M1 6.600l4.500 4.400 4.500-4.400" stroke="#1273d4" stroke-width="1.700" fill="none" stroke-linecap="round" stroke-linejoin="round"/></svg>
<svg style="left:1054.5px;top:379.5px" width="11" height="12" viewBox="0 0 11 12"><path d="M5.500 11.400V1.200M1 5.400l4.500-4.400 4.500 4.400" stroke="#1273d4" stroke-width="1.700" fill="none" stroke-linecap="round" stroke-linejoin="round"/></svg>
<div class="a" style="left:259px;top:407px;width:909px;height:195px;overflow:hidden">
<div class="a cb" style="left:6px;top:16px;width:12px;height:12px"></div>
<div class="t sb lk" style="left:38.8px;top:14px;letter-spacing:0.17px;">Edit</div>
<div class="t" style="left:85.8px;top:14px;letter-spacing:-0.64px;">Is Lease For</div>
<div class="t sb lk" style="left:237.5px;top:6px;letter-spacing:-0.10px;">System manufacturer System Product Name</div>
<div class="t sb lk" style="left:237.5px;top:23px;">3600 MHz - ZISSU</div>
<div class="t" style="left:518.0px;top:14px;letter-spacing:-0.26px;">11-Mar-2026 19:41:23</div>
<div class="t" style="left:821.5px;top:14px;letter-spacing:-0.57px;">Lease for Server</div>
<div class="a cb" style="left:6px;top:62px;width:12px;height:12px"></div>
<div class="t sb lk" style="left:38.8px;top:60px;letter-spacing:0.17px;">Edit</div>
<div class="t" style="left:85.8px;top:60px;letter-spacing:-0.64px;">Is Lease For</div>
<div class="t sb lk" style="left:237.5px;top:52px;letter-spacing:-0.25px;">HP ProLiant DL380 Gen9 2400 MHz - 881310-</div>
<div class="t sb lk" style="left:237.5px;top:69px;letter-spacing:-0.27px;">ZX</div>
<div class="t" style="left:518.0px;top:60px;letter-spacing:-0.26px;">11-Mar-2026 19:41:23</div>
<div class="t" style="left:821.5px;top:60px;letter-spacing:-0.57px;">Lease for Server</div>
<div class="a" style="left:0;top:92px;width:909px;height:46px;background:#eef1f8"></div>
<div class="a cb" style="left:6px;top:108px;width:12px;height:12px"></div>
<div class="t sb lk" style="left:38.8px;top:106px;letter-spacing:0.17px;">Edit</div>
<div class="t" style="left:85.8px;top:106px;letter-spacing:-0.64px;">Is Lease For</div>
<div class="t sb lk" style="left:237.5px;top:98px;letter-spacing:-0.08px;">Dell PowerEdge M630 2200 MHz -</div>
<div class="t sb lk" style="left:237.5px;top:115px;letter-spacing:-0.75px;">SABVICG04</div>
<div class="t" style="left:518.0px;top:106px;letter-spacing:-0.26px;">11-Mar-2026 19:41:23</div>
<div class="t" style="left:821.5px;top:106px;letter-spacing:-0.57px;">Lease for Server</div>
<div class="a cb" style="left:6px;top:154px;width:12px;height:12px"></div>
<div class="t sb lk" style="left:38.8px;top:152px;letter-spacing:0.17px;">Edit</div>
<div class="t" style="left:85.8px;top:152px;letter-spacing:-0.64px;">Is Lease For</div>
<div class="t sb lk" style="left:237.5px;top:144px;letter-spacing:-0.21px;">HP ProLiant DL380 Gen9 2400 MHz - 881307-</div>
<div class="t sb lk" style="left:237.5px;top:161px;letter-spacing:-1.15px;">YU</div>
<div class="t" style="left:518.0px;top:152px;letter-spacing:-0.26px;">11-Mar-2026 19:41:23</div>
<div class="t" style="left:821.5px;top:152px;letter-spacing:-0.57px;">Lease for Server</div>
<div class="a cb" style="left:6px;top:200px;width:12px;height:12px"></div>
<div class="t sb lk" style="left:38.8px;top:198px;letter-spacing:0.17px;">Edit</div>
<div class="t" style="left:85.8px;top:198px;letter-spacing:-0.64px;">Is Lease For</div>
<div class="t sb lk" style="left:237.5px;top:190px;letter-spacing:-0.08px;">Dell PowerEdge M630 2200 MHz -</div>
<div class="t sb lk" style="left:237.5px;top:207px;letter-spacing:-0.75px;">SABVICG05</div>
<div class="t" style="left:518.0px;top:198px;letter-spacing:-0.26px;">11-Mar-2026 19:41:23</div>
<div class="t" style="left:821.5px;top:198px;letter-spacing:-0.57px;">Lease for Server</div>
</div>
<div class="a" style="left:1168px;top:407px;width:11px;height:195px;background:#f1f1f1"></div>
<div class="a" style="left:1171px;top:419px;width:5px;height:143px;border-radius:3px;background:#c1c1c1"></div>
<svg style="left:1170.5px;top:410px" width="6" height="4" viewBox="0 0 6 4"><path d="M0 4h6L3 0z" fill="#c8c8c8"/></svg>
<svg style="left:1170.5px;top:594.5px" width="6" height="4" viewBox="0 0 6 4"><path d="M0 0h6L3 4z" fill="#c8c8c8"/></svg>
<div class="a" style="left:259px;top:602px;width:920px;height:10px;background:#f1f1f1"></div>
<div class="a" style="left:271px;top:604px;width:520px;height:6px;border-radius:3px;background:#c1c1c1"></div>
<svg style="left:262px;top:604px" width="4" height="6" viewBox="0 0 4 6"><path d="M4 0v6L0 3z" fill="#c1c1c1"/></svg>
<svg style="left:1162.5px;top:604px" width="4" height="6" viewBox="0 0 4 6"><path d="M0 0v6l4-3z" fill="#c1c1c1"/></svg>
<div class="mbtn " style="left:264px;top:622px;width:140px;height:32px"></div>
<div class="mbtn " style="left:414px;top:622px;width:140px;height:32px"></div>
<div class="mbtn " style="left:564px;top:622px;width:140px;height:32px"></div>
<div class="t sb" style="left:295.2px;top:629px;letter-spacing:0.05px;color:#1d2a48;">Add Children</div>
<div class="t sb" style="left:441.8px;top:629px;letter-spacing:-0.23px;color:#1d2a48;">Paste Children</div>
<div class="t sb" style="left:583.8px;top:629px;letter-spacing:-0.18px;color:#1d2a48;">Remove Children</div>
<div class="t" style="left:723.5px;top:629px;letter-spacing:-0.25px;">Relationship:</div>
<div class="a" style="left:803px;top:625px;width:140px;height:28px;border:1px solid #c0c0c0;background:#fff"></div>
<div class="t" style="left:808.5px;top:629px;letter-spacing:-0.15px;">Show All</div>
<svg style="left:927.5px;top:634.5px" width="8" height="5" viewBox="0 0 8 5"><path d="M0 0h8L4 4.600z" fill="#858585"/></svg>
<div class="t" style="left:948.5px;top:629px;letter-spacing:-0.26px;">Show History:</div>
<div class="a" style="left:1040px;top:630px;width:16px;height:16px;border:1.500px solid #727272;border-radius:3px;background:#fff"></div>
<div class="t sb lk" style="left:1068.5px;top:629px;letter-spacing:-0.08px;">Show Diagram</div>
<div class="mbtn ok" style="left:11px;top:753px;width:91px;height:30px"></div>
<div class="mbtn " style="left:113px;top:752px;width:93px;height:32px"></div>
<div class="mbtn " style="left:216px;top:752px;width:93px;height:32px"></div>
<div class="mbtn " style="left:319px;top:752px;width:93px;height:32px"></div>
<div class="mbtn " style="left:422px;top:752px;width:93px;height:32px"></div>
<div class="t" style="left:46.5px;top:760px;letter-spacing:-0.18px;color:#fff;font-weight:bold;">OK</div>
<div class="t sb" style="left:139.5px;top:759px;letter-spacing:-0.34px;color:#1d2a48;">Cancel</div>
<div class="t sb" style="left:248.8px;top:759px;letter-spacing:-0.77px;color:#1d2a48;">Save</div>
<div class="t sb" style="left:348.5px;top:759px;letter-spacing:-0.14px;color:#1d2a48;">Clone</div>
<div class="t sb" style="left:455.3px;top:759px;letter-spacing:0.26px;color:#1d2a48;">Split</div>
<div class="mbtn " style="left:550px;top:753px;width:170px;height:32px"></div>
<svg style="left:556.7px;top:762.3px" width="9" height="13" viewBox="0 0 9 13"><path d="M0 0v10.800l2.700-2.500 1.900 4.300 1.700-.8-1.900-4.100H8.400z" fill="#1a5cb0"/></svg>
<div class="t sb" style="left:570.3px;top:760px;letter-spacing:0.07px;color:#1d2a48;">Actions for this Asset</div>
<svg style="left:704.5px;top:766.6px" width="9" height="5" viewBox="0 0 9 5"><path d="M0 .5A.5.500 0 0 1 .5 0h8a.5.500 0 0 1 .4.900L4.900 4.800a.6.600 0 0 1-.8 0L.1.900z" fill="#1273d4"/></svg>
<div class="mbtn " style="left:740px;top:752px;width:100px;height:32px"></div>
<div class="t sb" style="left:753.8px;top:759px;letter-spacing:-0.15px;color:#1d2a48;">Next Record</div>
<svg style="left:849.5px;top:761.5px" width="13.500" height="13" viewBox="0 0 13.500 13"><path d="M13 2.700a3.700 3.700 0 0 1-4.900 4.300L2.700 12.500a1.350 1.350 0 0 1-2-2L6.300 5.100A3.700 3.700 0 0 1 10.600.3L8.400 2.600l.4 1.900 1.900.4z" fill="#1273d4"/></svg>
<div class="t sb lk" style="left:865.8px;top:759px;font-size:11px;letter-spacing:-0.36px;">Edit Form...</div>
</div>
</body></html>
